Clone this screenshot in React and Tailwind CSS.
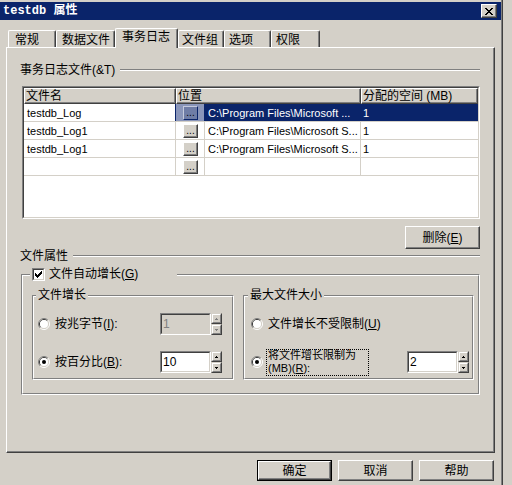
import React from "react";

// Classic 3D frames used by the dialog controls
const RAISED =
  "border border-t-white border-l-white border-r-[#404040] border-b-[#404040] shadow-[inset_-1px_-1px_#808080]";
const SUNKEN_OUT = "border border-t-[#808080] border-l-[#808080] border-r-white border-b-white";
const SUNKEN_IN = "border border-t-[#404040] border-l-[#404040] border-r-[#d4d0c8] border-b-[#d4d0c8]";
const ETCH_OUT = "border border-t-[#808080] border-l-[#808080] border-r-white border-b-white";
const ETCH_IN = "border border-t-white border-l-white border-r-[#808080] border-b-[#808080]";

function PixelIcon({ rows, color = "#000", w, h }) {
  const rects = [];
  rows.forEach((r, y) => {
    for (let x = 0; x < r.length; x++) {
      if (r[x] === "#") rects.push(<rect key={`${x}-${y}`} x={x} y={y} width="1" height="1" fill={color} />);
    }
  });
  return (
    <svg width={w} height={h} viewBox={`0 0 ${w} ${h}`} shapeRendering="crispEdges" className="shrink-0">
      {rects}
    </svg>
  );
}

const CLOSE_X = ["##....##", ".##..##.", "..####..", "...##...", "..####..", ".##..##.", "##....##"];
const CHECK = ["......#", ".....##", "#...###", "##.###.", "#####..", ".###...", "..#...."];
const UP = [".#.", "###"];
const DOWN = ["###", ".#."];

function U({ children }) {
  return <span className="underline underline-offset-[1px]">{children}</span>;
}

function Radio({ checked }) {
  return (
    <svg width="12" height="12" viewBox="0 0 12 12" className="shrink-0">
      <path d="M2.11 9.89 A5.5 5.5 0 0 1 9.89 2.11" stroke="#808080" fill="none" />
      <path d="M9.89 2.11 A5.5 5.5 0 0 1 2.11 9.89" stroke="#ffffff" fill="none" />
      <path d="M2.82 9.18 A4.5 4.5 0 0 1 9.18 2.82" stroke="#404040" fill="none" />
      <path d="M9.18 2.82 A4.5 4.5 0 0 1 2.82 9.18" stroke="#d4d0c8" fill="none" />
      <circle cx="6" cy="6" r="4" fill="#fff" />
      {checked && <circle cx="6" cy="6" r="2" fill="#000" />}
    </svg>
  );
}

function CheckBox() {
  return (
    <div className={`w-[13px] h-[13px] shrink-0 ${SUNKEN_OUT}`}>
      <div className={`w-full h-full bg-white flex items-center justify-center ${SUNKEN_IN}`}>
        <PixelIcon rows={CHECK} w={7} h={7} />
      </div>
    </div>
  );
}

function SpinButton({ rows, disabled }) {
  return (
    <div className="h-[11px] w-[11px] border border-t-[#d4d0c8] border-l-[#d4d0c8] border-r-[#404040] border-b-[#404040] bg-[#d4d0c8]">
      <div className="w-full h-full border border-t-white border-l-white border-r-[#808080] border-b-[#808080] flex items-center justify-center">
        <PixelIcon rows={rows} w={3} h={2} color={disabled ? "#808080" : "#000"} />
      </div>
    </div>
  );
}

function SpinEdit({ value, disabled, className = "" }) {
  return (
    <div className={`flex h-[22px] shrink-0 ${className}`}>
      <div className={`w-[51px] h-full ${SUNKEN_OUT}`}>
        <div
          className={
            disabled
              ? `h-full flex items-center pl-[1px] bg-[#d4d0c8] text-[#808080] ${SUNKEN_IN}`
              : `h-full flex items-center pl-[1px] bg-white text-black ${SUNKEN_IN}`
          }
        >
          {value}
        </div>
      </div>
      <div className="flex flex-col">
        <SpinButton rows={UP} disabled={disabled} />
        <SpinButton rows={DOWN} disabled={disabled} />
      </div>
    </div>
  );
}

function SectionLabel({ children, className = "" }) {
  return (
    <div className={`flex items-center h-[14px] shrink-0 ${className}`}>
      <span className="whitespace-nowrap">{children}</span>
      <div className="flex-1 ml-[5px] border-t border-t-[#808080] border-b border-b-white" />
    </div>
  );
}

function Group({ title, legendClass = "", className = "", children }) {
  return (
    <div className={`h-[85px] shrink-0 ${ETCH_OUT} ${className}`}>
      <div className={`h-full flex flex-col ${ETCH_IN}`}>
        <div className={`self-start -mt-[9px] h-[14px] bg-[#d4d0c8] px-[2px] flex items-center whitespace-nowrap ${legendClass}`}>
          {title}
        </div>
        {children}
      </div>
    </div>
  );
}

function Button({ children, isDefault, className = "" }) {
  if (isDefault) {
    return (
      <div className={`border border-black ${className}`}>
        <div className={`w-full h-full flex items-center justify-center ${RAISED}`}>{children}</div>
      </div>
    );
  }
  return <div className={`flex items-center justify-center ${RAISED} ${className}`}>{children}</div>;
}

function Tab({ label, width, pad, selected }) {
  if (selected) {
    return (
      <div
        className={`relative z-10 -mb-[1px] h-[20px] ${width} ${pad} bg-[#d4d0c8] flex items-center pb-[4px] border-t border-l border-t-white border-l-white border-r border-r-[#404040] shadow-[inset_-1px_0_#808080] rounded-tl-[2px] rounded-tr-[2px]`}
      >
        {label}
      </div>
    );
  }
  return (
    <div
      className={`h-[17px] ${width} ${pad} flex items-center pt-[1px] border-t border-l border-t-white border-l-white border-r border-r-[#404040] shadow-[inset_-1px_0_#808080] rounded-tl-[2px] rounded-tr-[2px]`}
    >
      {label}
    </div>
  );
}

const ROWS = [
  { name: "testdb_Log", path: "C:\\Program Files\\Microsoft ...", size: "1", selected: true },
  { name: "testdb_Log1", path: "C:\\Program Files\\Microsoft S...", size: "1" },
  { name: "testdb_Log1", path: "C:\\Program Files\\Microsoft S...", size: "1" },
  { name: "", path: "", size: "" },
];

function BrowseButton({ selected }) {
  return (
    <div
      className={
        selected
          ? "w-[15px] h-[14px] ml-[7px] border border-t-[#c4cadc] border-l-[#c4cadc] border-r-[#0a246a] border-b-[#0a246a] bg-[#6f7da6] flex items-end justify-center text-[10px] leading-[10px] pb-[1px] text-black"
          : `w-[15px] h-[14px] ml-[7px] bg-[#d4d0c8] flex items-end justify-center text-[10px] leading-[10px] pb-[1px] text-black ${RAISED}`
      }
    >
      ...
    </div>
  );
}

function LogRow({ name, path, size, selected }) {
  return (
    <div className="h-[18px] flex border-b border-b-[#d4d0c8] shrink-0 text-[11px]">
      <div className="w-[152px] border-r border-r-[#d4d0c8] pl-[3px] flex items-center">{name}</div>
      {selected ? (
        <>
          <div className="-ml-[1px] w-[30px] border-l border-l-[#0a246a] border-r border-r-[#0a246a] bg-[#8a96ba] flex items-center">
            <BrowseButton selected />
          </div>
          <div className="w-[156px] bg-[#0a246a] text-white pl-[3px] flex items-center whitespace-nowrap">{path}</div>
          <div className="flex-1 bg-[#0a246a] text-white pl-[2px] flex items-center">{size}</div>
        </>
      ) : (
        <>
          <div className="w-[29px] border-r border-r-[#d4d0c8] flex items-center">
            <BrowseButton />
          </div>
          <div className="w-[156px] border-r border-r-[#d4d0c8] pl-[3px] flex items-center whitespace-nowrap">{path}</div>
          <div className="flex-1 pl-[2px] flex items-center">{size}</div>
        </>
      )}
    </div>
  );
}

const HEAD =
  "h-full flex items-center pb-[1px] border-t border-l border-t-white border-l-white border-r border-b border-r-[#404040] border-b-[#404040] shadow-[inset_-1px_-1px_#808080]";

export default function App() {
  return (
    <div className="w-[512px] h-[485px] overflow-hidden bg-[#d4d0c8] font-['Liberation_Sans','Noto_Sans_CJK_SC',sans-serif] text-[12px] leading-[14px] text-black">
      <div className="w-[503px] h-full pt-[2px] flex flex-col border-r border-r-[#404040] shadow-[inset_-1px_0_#808080]">
        {/* title bar */}
        <div className="w-[501px] h-[18px] bg-[#0a246a] flex items-center justify-between pl-[3px] pr-[4px] shrink-0">
          <span className="text-white font-bold text-[12px] font-['Liberation_Mono','Noto_Sans_CJK_SC',monospace] whitespace-pre">
            testdb 属性
          </span>
          <div className={`w-[16px] h-[14px] bg-[#d4d0c8] flex items-center justify-center ${RAISED}`}>
            <PixelIcon rows={CLOSE_X} w={8} h={7} />
          </div>
        </div>

        {/* tab strip */}
        <div className="h-[27px] flex items-end pl-[8px] shrink-0">
          <Tab label="常规" width="w-[48px]" pad="pl-[6px]" />
          <Tab label="数据文件" width="w-[59px]" pad="pl-[5px]" />
          <Tab label="事务日志" width="w-[63px]" pad="pl-[6px]" selected />
          <Tab label="文件组" width="w-[46px]" pad="pl-[3px]" />
          <Tab label="选项" width="w-[47px]" pad="pl-[4px]" />
          <Tab label="权限" width="w-[49px]" pad="pl-[4px]" />
        </div>

        {/* tab page */}
        <div className="ml-[6px] w-[489px] h-[406px] shrink-0 flex flex-col border border-t-white border-l-white border-r-[#404040] border-b-[#404040] shadow-[inset_-1px_-1px_#808080]">
          <SectionLabel className="ml-[13px] mt-[15px] w-[460px]">事务日志文件(&amp;T)</SectionLabel>

          {/* log file list */}
          <div className={`ml-[15px] mt-[9px] w-[458px] h-[133px] shrink-0 ${SUNKEN_OUT}`}>
            <div className={`h-full bg-white flex flex-col overflow-hidden ${SUNKEN_IN}`}>
              <div className="h-[16px] flex bg-[#d4d0c8] shrink-0">
                <div className={`w-[152px] pl-[1px] ${HEAD}`}>文件名</div>
                <div className={`w-[185px] pl-[1px] ${HEAD}`}>位置</div>
                <div className={`w-[117px] pl-[1px] ${HEAD}`}>分配的空间 (MB)</div>
              </div>
              {ROWS.map((r, i) => (
                <LogRow key={i} {...r} />
              ))}
            </div>
          </div>

          <Button className="ml-[398px] mt-[7px] w-[75px] h-[23px] shrink-0">
            删除(<U>E</U>)
          </Button>

          <SectionLabel className="ml-[13px] w-[460px]">文件属性</SectionLabel>

          {/* auto-growth group */}
          <div className={`ml-[14px] mt-[11px] w-[459px] h-[121px] shrink-0 ${ETCH_OUT}`}>
            <div className={`h-full flex flex-col ${ETCH_IN}`}>
              <div className="self-start ml-[7px] -mt-[9px] h-[14px] w-[147px] bg-[#d4d0c8] flex items-center pl-[2px]">
                <CheckBox />
                <span className="ml-[4px] whitespace-nowrap">
                  文件自动增长(<U>G</U>)
                </span>
              </div>

              <div className="flex mt-[14px] ml-[9px] gap-[9px]">
                <Group title="文件增长" className="w-[202px]" legendClass="ml-[2px]">
                  <div className="flex items-center h-[22px] mt-[11px]">
                    <div className="ml-[4px]">
                      <Radio />
                    </div>
                    <span className="ml-[5px] w-[105px] whitespace-nowrap">
                      按兆字节(<U>I</U>):
                    </span>
                    <SpinEdit value="1" disabled />
                  </div>
                  <div className="flex items-center h-[22px] mt-[16px]">
                    <div className="ml-[4px]">
                      <Radio checked />
                    </div>
                    <span className="ml-[5px] w-[105px] whitespace-nowrap">
                      按百分比(<U>B</U>):
                    </span>
                    <SpinEdit value="10" />
                  </div>
                </Group>

                <Group title="最大文件大小" className="w-[231px]" legendClass="ml-[3px]">
                  <div className="flex items-center h-[22px] mt-[11px]">
                    <div className="ml-[6px]">
                      <Radio />
                    </div>
                    <span className="ml-[5px] whitespace-nowrap">
                      文件增长不受限制(<U>U</U>)
                    </span>
                  </div>
                  <div className="flex items-center h-[22px] mt-[16px]">
                    <div className="ml-[6px]">
                      <Radio checked />
                    </div>
                    <div className="ml-[3px] w-[103px] h-[27px] shrink-0 border border-dotted border-black pl-[1px] flex flex-col justify-center text-[11px] leading-[13px]">
                      <span className="whitespace-nowrap">将文件增长限制为</span>
                      <span className="whitespace-nowrap">
                        (MB)(<U>R</U>):
                      </span>
                    </div>
                    <SpinEdit value="2" className="ml-[38px]" />
                  </div>
                </Group>
              </div>
            </div>
          </div>
        </div>

        {/* dialog buttons */}
        <div className="flex ml-[257px] mt-[7px] gap-[6px] shrink-0">
          <Button isDefault className="w-[75px] h-[21px]">
            确定
          </Button>
          <Button className="w-[75px] h-[21px]">取消</Button>
          <Button className="w-[75px] h-[21px]">帮助</Button>
        </div>
      </div>
    </div>
  );
}
